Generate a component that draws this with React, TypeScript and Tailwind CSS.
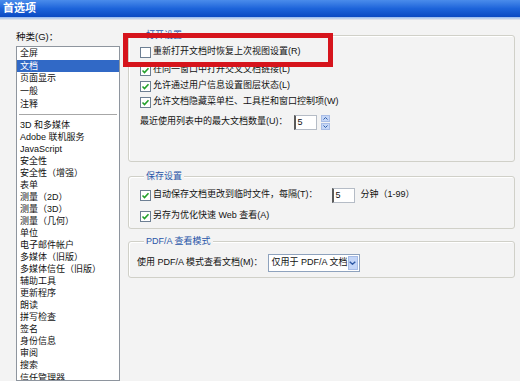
const topCats = ['全屏', '文档', '页面显示', '一般', '注释'];

const moreCats = [
  '3D 和多媒体',
  'Adobe 联机服务',
  'JavaScript',
  '安全性',
  '安全性（增强）',
  '表单',
  '测量（2D）',
  '测量（3D）',
  '测量（几何）',
  '单位',
  '电子邮件帐户',
  '多媒体（旧版）',
  '多媒体信任（旧版）',
  '辅助工具',
  '更新程序',
  '朗读',
  '拼写检查',
  '签名',
  '身份信息',
  '审阅',
  '搜索',
  '信任管理器',
];

function CheckBox({ checked }: { checked: boolean }) {
  return (
    <svg width="11" height="11" viewBox="0 0 11 11" className="shrink-0">
      <rect x="0.5" y="0.5" width="10" height="10" fill="#ffffff" stroke="#6d7f93" />
      {checked && <path d="M2.5 5.5 L4.5 7.5 L8.5 3.2" fill="none" stroke="#23a12a" strokeWidth="1.6" />}
    </svg>
  );
}

function CheckRow({ checked, label, className }: { checked: boolean; label: string; className: string }) {
  return (
    <div className={`flex items-center gap-[2px] h-[14px] whitespace-nowrap ${className}`}>
      <CheckBox checked={checked} />
      <span>{label}</span>
    </div>
  );
}

function NumBox() {
  return (
    <div className="w-[23px] h-[15px] bg-white border border-[#b5bcc6] border-l-2 border-l-[#5a5a5a] pl-[2px] leading-[13px]">
      5
    </div>
  );
}

function Group({ title, className, children }: { title: string; className: string; children: React.ReactNode }) {
  return (
    <div className={`border border-[#d0d0c8] rounded-[3px] shadow-[inset_1px_1px_0_#ffffff] pl-[11px] ${className}`}>
      <div className="w-fit -mt-[7px] ml-[4px] px-[2px] bg-[#f3f3f3] text-[#2a56a8] leading-[12px]">{title}</div>
      {children}
    </div>
  );
}

export default function App() {
  return (
    <div
      className="relative w-[520px] h-[385px] overflow-hidden bg-white text-[9px] text-[#111] flex flex-col"
      style={{ fontFamily: '"Liberation Sans", "Noto Sans CJK SC", sans-serif' }}
    >
      <div className="h-[17px] shrink-0 bg-gradient-to-b from-[#4a8ceb] via-[#1d64da] to-[#0a49c2] flex items-center pl-[3px]">
        <span className="text-white font-bold text-[11px] leading-none">首选项</span>
      </div>
      <div className="h-[3px] shrink-0 bg-gradient-to-b from-[#8fb6ee] to-[#e9e9e9]" />

      <div className="h-[361px] shrink-0 flex bg-[#f3f3f3]">
        <div className="w-[124px] pl-[16px] pr-[4px] flex flex-col">
          <div className="pt-[11px] leading-[12px] text-[9.5px]">种类(G)：</div>
          <div className="mt-[3px] flex-1 min-h-0 overflow-hidden bg-white border border-[#8e959e] whitespace-nowrap">
            {topCats.map((c) => (
              <div
                key={c}
                className={`leading-[12.7px] pl-[3px] ${c === '文档' ? 'bg-[#3169c6] text-white' : ''}`}
              >
                {c}
              </div>
            ))}
            <div className="mt-[3px] mx-[2px] h-px bg-[#a7a7a7]" />
            <div className="mt-[4px]">
              {moreCats.map((c) => (
                <div key={c} className="leading-[12.05px] pl-[3px]">
                  {c}
                </div>
              ))}
            </div>
          </div>
        </div>

        <div className="flex-1 pl-[4px] pr-[5px] flex flex-col">
          <Group title="打开设置" className="mt-[15px] h-[127px]">
            <CheckRow checked={false} label="重新打开文档时恢复上次视图设置(R)" className="mt-[4px]" />
            <CheckRow checked label="在同一窗口中打开交叉文档链接(L)" className="mt-[4px]" />
            <CheckRow checked label="允许通过用户信息设置图层状态(L)" className="mt-[2px]" />
            <CheckRow checked label="允许文档隐藏菜单栏、工具栏和窗口控制项(W)" className="mt-[2px]" />
            <div className="mt-[5px] h-[16px] flex items-center whitespace-nowrap">
              <span>最近使用列表中的最大文档数量(U)：</span>
              <div className="ml-[6px]">
                <NumBox />
              </div>
              <div className="ml-[4px] flex flex-col gap-px">
                <div className="w-[9px] h-[7px] bg-[#c5d6f6] border border-[#a9bde6] flex items-center justify-center">
                  <svg width="5" height="3" viewBox="0 0 5 3">
                    <path d="M0.5 2.5 L2.5 0.5 L4.5 2.5" fill="none" stroke="#2f5ea8" />
                  </svg>
                </div>
                <div className="w-[9px] h-[7px] bg-[#c5d6f6] border border-[#a9bde6] flex items-center justify-center">
                  <svg width="5" height="3" viewBox="0 0 5 3">
                    <path d="M0.5 0.5 L2.5 2.5 L4.5 0.5" fill="none" stroke="#2f5ea8" />
                  </svg>
                </div>
              </div>
            </div>
          </Group>

          <Group title="保存设置" className="mt-[14px] h-[53px]">
            <div className="mt-[5px] h-[16px] flex items-center whitespace-nowrap">
              <CheckBox checked />
              <span className="ml-[2px]">自动保存文档更改到临时文件，每隔(T)：</span>
              <div className="ml-[14px]">
                <NumBox />
              </div>
              <span className="ml-[6px]">分钟（1-99）</span>
            </div>
            <CheckRow checked label="另存为优化快速 Web 查看(A)" className="mt-[6px]" />
          </Group>

          <Group title="PDF/A 查看模式" className="mt-[12px] h-[37px]">
            <div className="mt-[7px] h-[18px] flex items-center whitespace-nowrap">
              <span className="-ml-[3px]">使用 PDF/A 模式查看文档(M)：</span>
              <div className="ml-[5px] w-[92px] h-[18px] bg-white border border-[#8ea2bd] flex items-center">
                <span className="flex-1 pl-[3px]">仅用于 PDF/A 文档</span>
                <div className="w-[12px] h-[14px] mr-px bg-[#c3d5f7] border border-[#a5bbe6] flex items-center justify-center">
                  <svg width="7" height="4" viewBox="0 0 7 4">
                    <path d="M0.7 0.7 L3.5 3.2 L6.3 0.7" fill="none" stroke="#2d58a4" strokeWidth="1.4" />
                  </svg>
                </div>
              </div>
            </div>
          </Group>
        </div>
      </div>

      <div className="absolute left-[123px] top-[33px] w-[210px] h-[34px] border-[5px] border-[#d6141c]" />
    </div>
  );
}
